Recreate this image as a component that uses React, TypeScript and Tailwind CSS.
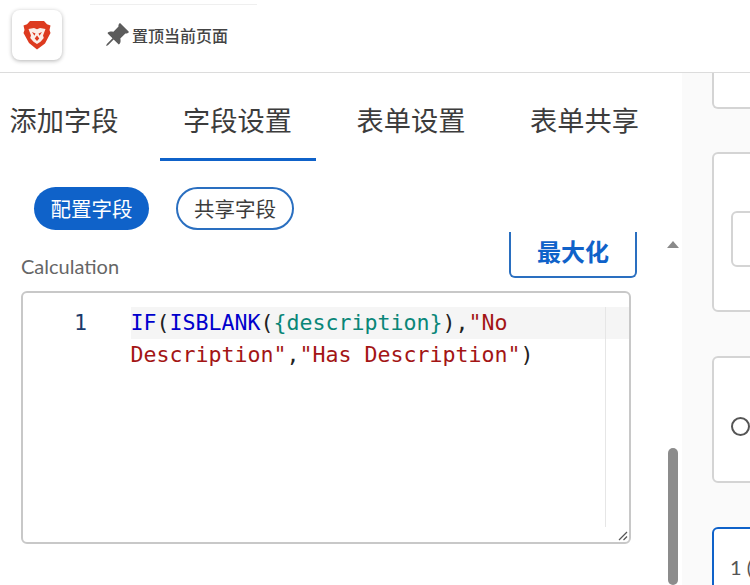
import React from 'react';
import { BsPinAngleFill } from 'react-icons/bs';

const cjk = 'font-["Noto_Sans_CJK_SC",sans-serif]';

const tabs = ['添加字段', '字段设置', '表单设置', '表单共享'];

const BraveLogo = () => (
  <svg width="28" height="30" viewBox="0 0 28 30">
    <path d="M7 1h14l3 3.200 3.500 1.300-1 4.500 1 3-5.500 10.500L14 29.500l-8-6.500L.5 13l1-3-1-4.500L4 4.200z" fill="#dd3a1f" />
    <path d="M5.500 9 11 8l3 1.200L17 8l5.500 1-2.500 6.500.8 2.500-3.300 3.800-3.500 2.200-3.500-2.200L7.200 18l.8-2.500z" fill="#fbeee9" />
    <path d="M9 12l3.500 1.500-1 2.300zM19 12l-3.500 1.500 1 2.300zM14 15.500V21l-2.300-2.500zM14 15.500V21l2.300-2.500z" fill="#dd3a1f" />
  </svg>
);

const App = () => {
  return (
    <div className="w-[750px] h-[585px] overflow-hidden flex flex-col bg-white">
      {/* top bar */}
      <div className="relative h-[73px] shrink-0 flex items-center border-b border-[#dcdcdc] pl-[12px] pb-[2px]">
        <div className="w-[50px] h-[50px] rounded-lg bg-white shadow-[0_1px_4px_rgba(0,0,0,0.3)] flex items-center justify-center">
          <BraveLogo />
        </div>
        <div className="ml-[42px] flex items-center">
          <BsPinAngleFill size={26} className="text-[#5c5c5c] -scale-x-100 rotate-90" />
          <span className={`${cjk} text-[16px] font-medium text-[#444] ml-[2px]`}>置顶当前页面</span>
        </div>
        <div className="absolute left-[90px] top-[4px] w-[167px] h-px bg-[#efefef]" />
      </div>

      <div className="flex flex-1 min-h-0">
        {/* left panel */}
        <div className="relative w-[682px] shrink-0 bg-white">
          <div className="flex gap-[17.500px] ml-[-14px] h-[88px]">
            {tabs.map((t, i) => (
              <div
                key={t}
                className={`${cjk} w-[156px] shrink-0 flex justify-center pt-[17px] text-[27.200px] leading-[58px] text-[#3c3c3c] ${i === 1 ? 'border-b-[3px] border-[#0f62c9]' : ''}`}
              >
                {t}
              </div>
            ))}
          </div>

          <div className="flex gap-[27px] mt-[26px] ml-[34px]">
            <div className={`${cjk} w-[115px] h-[43px] rounded-full bg-[#0f62c9] text-white text-[20.500px] flex items-center justify-center`}>配置字段</div>
            <div className={`${cjk} w-[118px] h-[43px] rounded-full border-2 border-[#2a6fc0] text-[#3c3c3c] text-[20.500px] flex items-center justify-center`}>共享字段</div>
          </div>

          <div className="flex items-end justify-between mt-[2px] h-[46px] pl-[21px] pr-[45px]">
            <span className="font-['Lato',sans-serif] text-[20px] leading-[24px] text-[#666]">Calculation</span>
            <div className={`${cjk} w-[128px] h-[46px] border-2 border-t-0 border-[#2a6fc0] rounded-b-md text-[#0f62c9] text-[24px] font-bold flex items-center justify-center pb-[7px]`}>最大化</div>
          </div>

          {/* editor */}
          <div className="relative mt-[13px] ml-[21px] w-[610px] h-[253px] border-2 border-[#c8c8c8] rounded-md bg-white pt-[14px] font-['DejaVu_Sans_Mono',monospace] text-[21.600px] leading-[32px] whitespace-pre">
            <div className="flex">
              <div className="w-[107.500px] shrink-0 pl-[51px] text-[#1b3a6b]">1</div>
              <div className="w-[498.500px] bg-[#f5f5f5]">
                <span className="text-[#0000cd]">IF</span>
                <span className="text-[#222]">(</span>
                <span className="text-[#0000cd]">ISBLANK</span>
                <span className="text-[#222]">(</span>
                <span className="text-[#098678]">{'{description}'}</span>
                <span className="text-[#222]">),</span>
                <span className="text-[#a31515]">"No</span>
              </div>
            </div>
            <div className="pl-[107.500px]">
              <span className="text-[#a31515]">Description"</span>
              <span className="text-[#222]">,</span>
              <span className="text-[#a31515]">"Has Description"</span>
              <span className="text-[#222]">)</span>
            </div>
            <div className="absolute left-[582px] top-[14px] w-px h-[220px] bg-[#e6e6e6]" />
            <svg className="absolute right-[1px] bottom-[1px]" width="10" height="10" viewBox="0 0 10 10">
              <path d="M1 9 9 1M5.500 9 9 5.500" stroke="#555" strokeWidth="1.200" fill="none" />
            </svg>
          </div>

          {/* scrollbar */}
          <div className="absolute left-[667px] top-[168px] w-0 h-0 border-x-[6px] border-x-transparent border-b-[7px] border-b-[#8a8a8a]" />
          <div className="absolute left-[668px] top-[375px] w-[10px] h-[137px] rounded-full bg-[#8c8c8c]" />
        </div>

        {/* right column, cut off by the window */}
        <div className="flex-1 min-w-0 overflow-hidden bg-[#fafafa] pl-[30px] flex flex-col gap-[44px]">
          <div className="w-[80px] h-[36px] shrink-0 border-2 border-t-0 border-[#d4d4d4] rounded-b-md bg-white" />
          <div className="w-[80px] h-[160px] shrink-0 border-2 border-[#d4d4d4] rounded-md bg-white pl-[17px] pt-[57px] mt-[-1px]">
            <div className="w-[60px] h-[56px] border-2 border-[#d4d4d4] rounded-md" />
          </div>
          <div className="w-[80px] h-[127px] shrink-0 border-2 border-[#d4d4d4] rounded-md bg-white pl-[17px] pt-[13px] flex items-center">
            <div className="w-[19px] h-[19px] shrink-0 rounded-full border-2 border-[#555]" />
          </div>
          <div className="w-[80px] h-[80px] shrink-0 border-2 border-[#0f62c9] rounded-md bg-white pl-[16px] pt-[26px] font-['Lato',sans-serif] text-[20px] leading-[24px] text-[#555] whitespace-pre">1 (</div>
        </div>
      </div>
    </div>
  );
};

export default App;
